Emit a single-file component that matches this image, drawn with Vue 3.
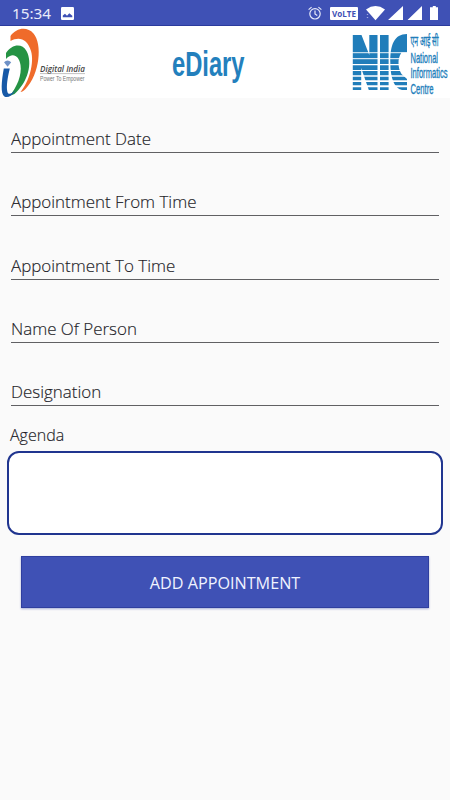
<template>
  <div class="screen">
    <div class="status-bar">
      <span class="clock">15:34</span>
      <svg class="photo-icon" width="13" height="13" viewBox="0 0 13 13">
        <rect width="13" height="13" rx="1.2" fill="#fff" />
        <path d="M1.8 10.2V8.6L4 6.8 6 8.8 8.3 6.2 11.3 8.8V10.2Z" fill="#3f51b5" />
      </svg>
      <svg class="system-icons" width="142" height="26" viewBox="0 0 142 26">
        <g fill="none" stroke="#e8ebfa" stroke-width="1.2">
          <circle cx="7" cy="13.8" r="5.2" />
          <path d="M7 10.6V14L9.3 15.5M.6 9.6 3.6 7.1M10.4 7.1 13.4 9.6" />
        </g>
        <rect x="22" y="7" width="28" height="13" rx="1" fill="#fff" />
        <text x="24" y="16.7" class="volte" textLength="24" lengthAdjust="spacingAndGlyphs">VoLTE</text>
        <path d="M58 9.4Q67.5 2.8 77 9.4L67.5 20.3Z" fill="#fff" />
        <path d="M58.5 15 59.5 13.8 60.5 15ZM58.5 17 59.5 18.2 60.5 17Z" fill="#a9b2e2" />
        <path d="M80 20 95 6V20ZM99.5 20 114 6V20Z" fill="#fff" />
        <path d="M124.8 6h3v1.2h2.2V20h-8V7.2h2.8V6Z" fill="#fff" />
      </svg>
    </div>

    <header class="banner">
      <svg width="90" height="72" viewBox="0 26 90 72">
        <path d="M10.5 36C16 28 27 26 33.5 33.5C42.5 44 40 74 25.5 89C23.7 91 22 92 20.5 92C29 82 34.5 63 31 51C27.6 38.8 19 36 10.5 41Z" fill="#ef6b2b" />
        <path d="M6 53C12 44 22 43 26.5 51C33 63 28 82 14.5 94L9.5 96C17 87 22 75 20.5 65C19 55.5 12.5 52 6 59Z" fill="#259344" />
        <path d="M3.8 68.5H9.8C7.5 78 6.3 86 7.3 91.5C8 95.3 11.5 94.2 16 90C12 96 7.5 98.3 4.4 96.5C.3 94 1.5 81 3.8 68.5Z" fill="#1759a7" />
        <path d="M4 62.3Q7.5 58.7 11.2 62.3L7.6 66.8Z" fill="#6e91c6" />
        <text x="40" y="71.5" class="di-name" textLength="45" lengthAdjust="spacingAndGlyphs">Digital India</text>
        <path d="M40 73.6H85" stroke="#999" stroke-width=".6" />
        <text x="40" y="80.8" class="di-sub" textLength="44.5" lengthAdjust="spacingAndGlyphs">Power To Empower</text>
      </svg>
      <svg class="title" width="80" height="72" viewBox="0 0 80 72">
        <text x="2" y="49.7" textLength="72.5" lengthAdjust="spacingAndGlyphs">eDiary</text>
      </svg>
      <svg width="100" height="72" viewBox="350 26 100 72">
        <g fill="#207dba">
          <path d="M352.8 35H361.5L369.3 55V35H377.5V90H368.8L361.2 68V90H352.8Z" />
          <path d="M380 35H388.6V90H380Z" />
          <path d="M407 34V52.5H401.5C399 56 398.5 60 398.5 63C398.5 67 399.5 71 401.5 74L407 79V90H402C394 88 390.3 78 390.3 62C390.3 45 394 34 407 34Z" />
        </g>
        <path
          v-for="line in stripes"
          :key="line.y"
          :d="`M352 ${line.y}H408`"
          :stroke-width="line.size"
          stroke="#fff"
        />
        <g class="nic-text">
          <text x="410.5" y="46.2" class="hindi" textLength="28" lengthAdjust="spacingAndGlyphs">एन आई सी</text>
          <text x="410.5" y="62.5" textLength="27.5" lengthAdjust="spacingAndGlyphs">National</text>
          <text x="410.5" y="78" textLength="37" lengthAdjust="spacingAndGlyphs">Informatics</text>
          <text x="410.5" y="93.5" textLength="23" lengthAdjust="spacingAndGlyphs">Centre</text>
        </g>
      </svg>
    </header>

    <form class="form" @submit.prevent>
      <input
        v-for="field in fields"
        :key="field.key"
        v-model="form[field.key]"
        class="field"
        type="text"
        :placeholder="field.label"
      />
      <label class="agenda-label" for="agenda">Agenda</label>
      <textarea id="agenda" v-model="form.agenda" class="agenda"></textarea>
      <button class="submit-btn" type="submit">ADD APPOINTMENT</button>
    </form>
  </div>
</template>

<script setup>
import { reactive } from 'vue'

const fields = [
  { key: 'date', label: 'Appointment Date' },
  { key: 'fromTime', label: 'Appointment From Time' },
  { key: 'toTime', label: 'Appointment To Time' },
  { key: 'person', label: 'Name Of Person' },
  { key: 'designation', label: 'Designation' }
]

const form = reactive({
  date: '',
  fromTime: '',
  toTime: '',
  person: '',
  designation: '',
  agenda: ''
})

// white cuts through the NIC letters
const stripes = [
  { y: 52.7, size: 0.9 },
  { y: 58.7, size: 1 },
  { y: 64.6, size: 1.1 },
  { y: 70.5, size: 1.2 },
  { y: 76, size: 1.4 },
  { y: 81.2, size: 1.7 },
  { y: 86.3, size: 2 }
]
</script>

<style>
body {
  background: #fafafa;
}
</style>

<style scoped>
.screen {
  width: 450px;
  height: 800px;
  overflow: hidden;
  background: #fafafa;
  font-family: "Open Sans", sans-serif;
}

.status-bar {
  display: flex;
  align-items: center;
  box-sizing: border-box;
  height: 26px;
  padding-left: 12px;
  background: #3f51b5;
  border-bottom: 1px solid #2b3b9d;
  color: #e8ebfa;
}

.clock {
  width: 49px;
  font-family: "Noto Sans", sans-serif;
  font-size: 15.3px;
  line-height: 24px;
}

.photo-icon {
  margin-top: 2px;
}

.system-icons {
  margin-left: auto;
}

.volte {
  font: bold 9px "Open Sans", sans-serif;
  fill: #3f51b5;
}

.banner {
  display: flex;
  height: 72px;
  background: #fff;
}

.banner svg {
  flex: none;
  overflow: visible;
}

.banner .title {
  margin: 0 auto 0 80px;
  font: bold 35px "Liberation Sans", sans-serif;
  fill: #2380bd;
}

.di-name {
  font: italic 600 9.5px "Open Sans", sans-serif;
  fill: #444;
}

.di-sub {
  font: 6.8px "Liberation Sans", sans-serif;
  fill: #777;
}

.nic-text {
  font: 15px "Liberation Sans", sans-serif;
  fill: #207dba;
  stroke: #207dba;
  stroke-width: 0.35px;
}

.hindi {
  font: 14px "Noto Sans", sans-serif;
}

.form {
  display: flex;
  flex-direction: column;
  padding: 23px 7px 0;
}

.field {
  box-sizing: border-box;
  height: 32px;
  margin: 0 4px 31.3px;
  padding: 4px 0 0;
  border: 0;
  border-bottom: 1px solid #606063;
  border-radius: 0;
  outline: none;
  background: transparent;
  color: #25252d;
  font: 300 16.95px "Open Sans", sans-serif;
}

.field::placeholder {
  color: #1d1d28;
  opacity: 1;
  -webkit-text-stroke: 0.15px #1d1d28;
}

.agenda-label {
  margin: -13px 3px 0;
  color: #1d1d28;
  font-size: 16px;
  font-weight: 300;
  line-height: 22px;
  -webkit-text-stroke: 0.15px #1d1d28;
}

.agenda {
  box-sizing: border-box;
  height: 84px;
  margin-top: 5px;
  border: 2px solid #20358f;
  border-radius: 12px;
  outline: none;
  background: #fff;
  resize: none;
}

.submit-btn {
  height: 52px;
  margin: 21px 14px 0;
  padding: 1px 0 0;
  border: 1px solid #2f3f9f;
  background: #3f51b5;
  box-shadow: 0 1px 2px #a5add6;
  color: #f0f3ff;
  font: 16.2px "Open Sans", sans-serif;
}
</style>
